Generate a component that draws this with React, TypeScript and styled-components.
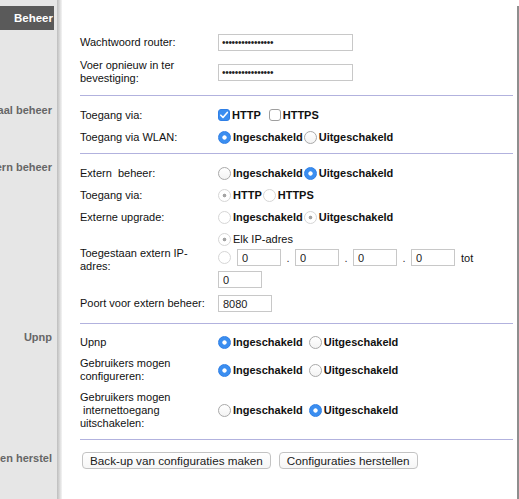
import React from 'react';
import styled, { createGlobalStyle } from 'styled-components';

const GlobalStyle = createGlobalStyle`
  html, body { margin: 0; padding: 0; background: #fff; }
  body {
    font-family: "Liberation Sans", Arial, Helvetica, sans-serif;
    font-size: 11px;
    color: #111;
  }
  * { box-sizing: border-box; }
`;

const Page = styled.div`
  display: grid;
  grid-template-columns: 62px 1fr;
  grid-template-rows: repeat(5, auto) 1fr;
  min-height: 100vh;
  width: 100%;
`;

const SideCell = styled.div<{ $pt: number }>`
  display: flex;
  justify-content: flex-end;
  align-items: flex-start;
  overflow: hidden;
  padding: ${(p) => p.$pt}px 10px 0 0;
  background: linear-gradient(
    to right,
    #e6e6e6 0,
    #e6e6e6 57px,
    #bdbdbd 57px,
    #d2d2d2 59px,
    #f4f4f4 62px
  );
`;

const HeaderSide = styled(SideCell)`
  justify-content: flex-start;
  padding-right: 0;
`;

const SideBar = styled.div`
  width: 54px;
  height: 24px;
  display: flex;
  align-items: center;
  justify-content: flex-end;
  padding-right: 1px;
  background: #5a5a5a;
  color: #fff;
  font-weight: bold;
  font-size: 11.5px;
  white-space: nowrap;
  overflow: hidden;
`;

const SideLabel = styled.div`
  flex: none;
  white-space: nowrap;
  font-weight: bold;
  color: #666;
  line-height: 13px;
`;

const ContentCell = styled.div<{ $mt?: number }>`
  margin-top: ${(p) => p.$mt ?? 0}px;
  border-right: 2px solid #8e8e8e;
  padding: 0 4px 0 18px;
`;

const Block = styled.div<{ $first?: boolean; $pt: number; $pb: number }>`
  border-top: ${(p) => (p.$first ? 'none' : '1px solid #b2b2de')};
  padding: ${(p) => p.$pt}px 0 ${(p) => p.$pb}px;
`;

const Row = styled.div`
  display: flex;
  align-items: center;
  padding: 4px 0;
`;

const IPRow = styled(Row)`
  padding: 4px 0 3px;
`;

const Label = styled.div`
  flex: 0 0 138px;
  padding-right: 8px;
  line-height: 13px;
  color: #111;
`;

const Controls = styled.div<{ $gap?: number }>`
  display: flex;
  align-items: center;
  min-height: 14px;
  gap: ${(p) => p.$gap ?? 1}px;
`;

const Option = styled.label<{ $regular?: boolean }>`
  display: inline-flex;
  align-items: center;
  gap: 2px;
  font-weight: ${(p) => (p.$regular ? 'normal' : 'bold')};
  color: #111;
  line-height: 13px;
  white-space: nowrap;
`;

const Radio = styled.input.attrs({ type: 'radio' })`
  appearance: none;
  -webkit-appearance: none;
  margin: 0;
  flex: none;
  width: 13px;
  height: 13px;
  border-radius: 50%;
  border: 1px solid #a9a9a9;
  background: linear-gradient(#ffffff, #f3f3f3);
  &:checked {
    border-color: #2f7fe6;
    background: radial-gradient(circle, #ffffff 0 1.8px, #3b8ef0 2.5px);
  }
  &:disabled {
    border-color: #d6d6d6;
    background: #fff;
  }
  &:disabled:checked {
    background: radial-gradient(circle, #a5a5a5 0 1.5px, #ffffff 2.2px);
  }
`;

const CheckBox = styled.span<{ $checked?: boolean }>`
  flex: none;
  width: 12px;
  height: 12px;
  border-radius: 3px;
  border: 1px solid ${(p) => (p.$checked ? '#2f7fe6' : '#9f9f9f')};
  background: ${(p) => (p.$checked ? '#3b8ef0' : '#fff')};
  display: inline-flex;
  align-items: center;
  justify-content: center;
`;

const TextInput = styled.input.attrs({ type: 'text' })<{ $w: number }>`
  width: ${(p) => p.$w}px;
  height: 17px;
  margin: 0;
  padding: 0 4px;
  border: 1px solid #c8c8c8;
  border-radius: 0;
  background: #fff;
  font-family: "Liberation Sans", Arial, Helvetica, sans-serif;
  font-size: 11px;
  color: #222;
  outline: none;
`;

const PwInput = styled(TextInput)`
  letter-spacing: -0.3px;
  font-size: 10px;
  padding-left: 3px;
`;

const IPCell = styled.div`
  display: flex;
  flex-direction: column;
  align-items: flex-start;
`;

const ElkLine = styled.div`
  display: flex;
  align-items: center;
  min-height: 14px;
  margin-bottom: 3px;
`;

const IPLine = styled.div`
  display: flex;
  align-items: center;
  height: 17px;
  margin-bottom: 5px;
`;

const IPGap = styled.span`
  width: 6px;
`;

const DotSep = styled.span`
  width: 14px;
  text-align: center;
  color: #333;
`;

const Tot = styled.span`
  margin-left: 6px;
  color: #111;
`;

const ButtonRow = styled.div`
  display: flex;
  gap: 8px;
  padding-left: 2px;
`;

const Button = styled.button`
  height: 17px;
  padding: 0 7px;
  border: 1px solid #c3c3c3;
  border-radius: 4px;
  background: linear-gradient(#ffffff, #f6f6f6);
  font-family: "Liberation Sans", Arial, Helvetica, sans-serif;
  font-size: 11.7px;
  color: #1a1a1a;
  line-height: 15px;
  cursor: pointer;
`;

const Check = ({ checked, label }: { checked?: boolean; label: string }) => (
  <Option>
    <CheckBox role="checkbox" aria-checked={!!checked} $checked={checked}>
      {checked && (
        <svg width="10" height="10" viewBox="0 0 10 10">
          <path d="M1.8 5.2 L4 7.4 L8.3 2.4" fill="none" stroke="#fff" strokeWidth="1.6" strokeLinecap="round" strokeLinejoin="round" />
        </svg>
      )}
    </CheckBox>
    {label}
  </Option>
);

const RadioOpt = ({
  name,
  checked,
  disabled,
  label,
  regular,
}: {
  name: string;
  checked?: boolean;
  disabled?: boolean;
  label: string;
  regular?: boolean;
}) => (
  <Option $regular={regular}>
    <Radio name={name} defaultChecked={checked} disabled={disabled} />
    {label}
  </Option>
);

const pw = '\u2022'.repeat(16);

export default function App() {
  return (
    <>
      <GlobalStyle />
      <Page>
        <HeaderSide $pt={6}>
          <SideBar>Beheer</SideBar>
        </HeaderSide>
        <ContentCell $mt={6} />

        <SideCell $pt={0} />
        <ContentCell>
          <Block $first $pt={0} $pb={6}>
            <Row>
              <Label>Wachtwoord router:</Label>
              <Controls>
                <PwInput $w={135} defaultValue={pw} />
              </Controls>
            </Row>
            <Row>
              <Label>Voer opnieuw in ter bevestiging:</Label>
              <Controls>
                <PwInput $w={135} defaultValue={pw} />
              </Controls>
            </Row>
          </Block>
        </ContentCell>

        <SideCell $pt={9}>
          <SideLabel>Lokaal beheer</SideLabel>
        </SideCell>
        <ContentCell>
          <Block $pt={8} $pb={5}>
            <Row>
              <Label>Toegang via:</Label>
              <Controls $gap={8}>
                <Check checked label="HTTP" />
                <Check label="HTTPS" />
              </Controls>
            </Row>
            <Row>
              <Label>Toegang via WLAN:</Label>
              <Controls $gap={1}>
                <RadioOpt name="wlan" checked label="Ingeschakeld" />
                <RadioOpt name="wlan" label="Uitgeschakeld" />
              </Controls>
            </Row>
          </Block>
        </ContentCell>

        <SideCell $pt={8}>
          <SideLabel>Extern beheer</SideLabel>
        </SideCell>
        <ContentCell>
          <Block $pt={8} $pb={7}>
            <Row>
              <Label>Extern&nbsp; beheer:</Label>
              <Controls $gap={1}>
                <RadioOpt name="extern" label="Ingeschakeld" />
                <RadioOpt name="extern" checked label="Uitgeschakeld" />
              </Controls>
            </Row>
            <Row>
              <Label>Toegang via:</Label>
              <Controls $gap={1}>
                <RadioOpt name="extvia" checked disabled label="HTTP" />
                <RadioOpt name="extvia" disabled label="HTTPS" />
              </Controls>
            </Row>
            <Row>
              <Label>Externe upgrade:</Label>
              <Controls $gap={1}>
                <RadioOpt name="upgrade" disabled label="Ingeschakeld" />
                <RadioOpt name="upgrade" checked disabled label="Uitgeschakeld" />
              </Controls>
            </Row>
            <IPRow>
              <Label>Toegestaan extern IP-adres:</Label>
              <IPCell>
                <ElkLine>
                  <RadioOpt name="ip" checked disabled regular label="Elk IP-adres" />
                </ElkLine>
                <IPLine>
                  <Radio name="ip" disabled />
                  <IPGap />
                  <TextInput $w={44} defaultValue="0" disabled />
                  <DotSep>.</DotSep>
                  <TextInput $w={44} defaultValue="0" disabled />
                  <DotSep>.</DotSep>
                  <TextInput $w={44} defaultValue="0" disabled />
                  <DotSep>.</DotSep>
                  <TextInput $w={44} defaultValue="0" disabled />
                  <Tot>tot</Tot>
                </IPLine>
                <TextInput $w={44} defaultValue="0" disabled />
              </IPCell>
            </IPRow>
            <Row>
              <Label>Poort voor extern beheer:</Label>
              <Controls>
                <TextInput $w={54} defaultValue="8080" disabled />
              </Controls>
            </Row>
          </Block>
        </ContentCell>

        <SideCell $pt={8}>
          <SideLabel>Upnp</SideLabel>
        </SideCell>
        <ContentCell>
          <Block $pt={7} $pb={5}>
            <Row>
              <Label>Upnp</Label>
              <Controls $gap={6}>
                <RadioOpt name="upnp" checked label="Ingeschakeld" />
                <RadioOpt name="upnp" label="Uitgeschakeld" />
              </Controls>
            </Row>
            <Row>
              <Label>Gebruikers mogen configureren:</Label>
              <Controls $gap={6}>
                <RadioOpt name="conf" checked label="Ingeschakeld" />
                <RadioOpt name="conf" label="Uitgeschakeld" />
              </Controls>
            </Row>
            <Row>
              <Label>
                Gebruikers mogen
                <br />
                &nbsp;internettoegang uitschakelen:
              </Label>
              <Controls $gap={6}>
                <RadioOpt name="inet" label="Ingeschakeld" />
                <RadioOpt name="inet" checked label="Uitgeschakeld" />
              </Controls>
            </Row>
          </Block>
        </ContentCell>

        <SideCell $pt={13}>
          <SideLabel>Back-up en herstel</SideLabel>
        </SideCell>
        <ContentCell>
          <Block $pt={12} $pb={0}>
            <ButtonRow>
              <Button type="button">Back-up van configuraties maken</Button>
              <Button type="button">Configuraties herstellen</Button>
            </ButtonRow>
          </Block>
        </ContentCell>
      </Page>
    </>
  );
}
